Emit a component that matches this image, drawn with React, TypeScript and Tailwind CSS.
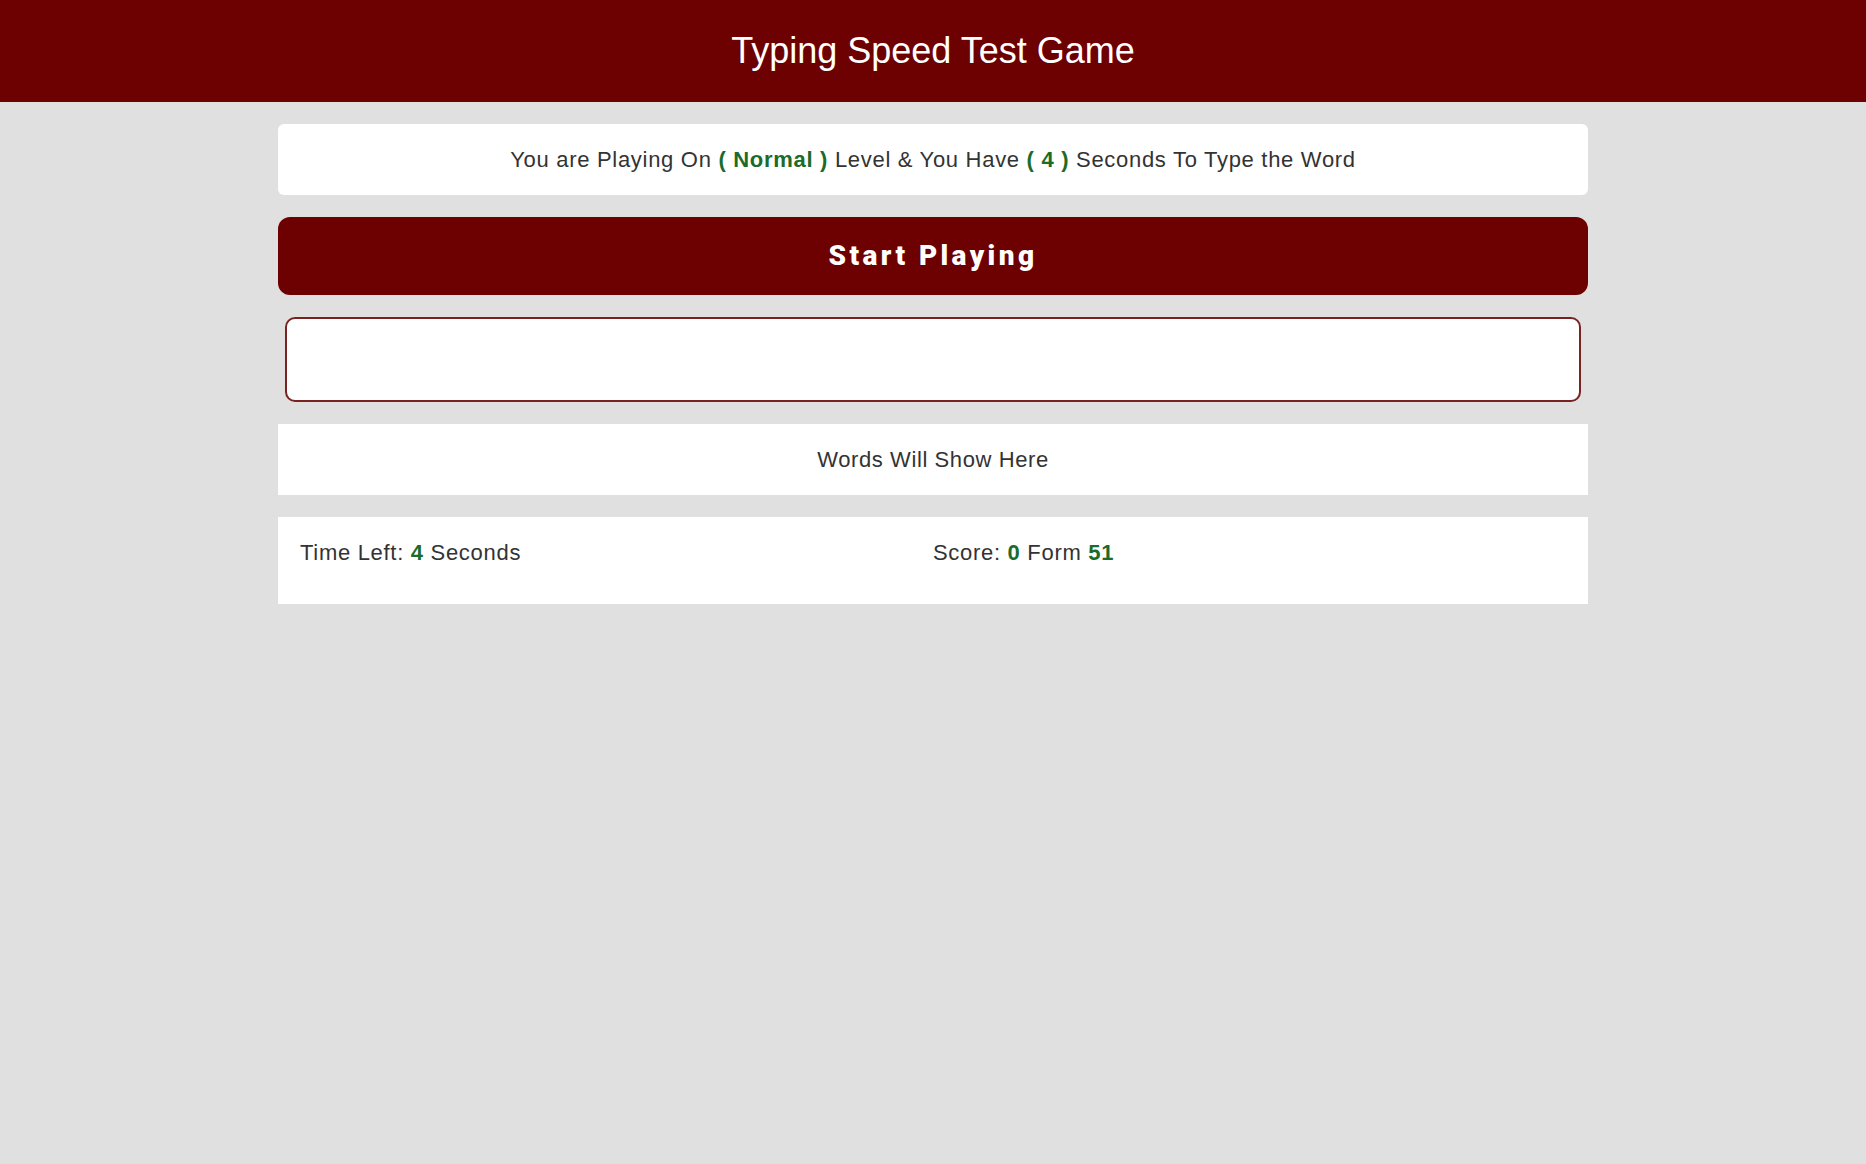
export default function App() {
  const green = "text-[#1b6b2b] font-bold";

  return (
    <div className="min-h-screen bg-[#e0e0e0] text-[#333] font-['Liberation_Sans',Arial,sans-serif]">
      <header className="h-[102px] bg-[#6d0000] flex items-center justify-center">
        <h1 className="text-[36px] text-white">Typing Speed Test Game</h1>
      </header>

      <main className="w-[1310px] mx-auto pt-[22px] flex flex-col gap-[22px]">
        <div className="h-[71px] bg-white rounded-md flex items-center justify-center text-[22px] tracking-[0.7px]">
          <span>
            You are Playing On <span className={green}>( Normal )</span> Level &amp; You Have{" "}
            <span className={green}>( 4 )</span> Seconds To Type the Word
          </span>
        </div>

        <button className="h-[78px] bg-[#6d0000] rounded-xl text-white text-[28px] font-black tracking-[3.4px] font-['Roboto',sans-serif]">
          Start Playing
        </button>

        <input
          type="text"
          className="mx-[7px] h-[85px] bg-white border-2 border-[#7a2222] rounded-[10px] outline-none px-4 text-[22px]"
        />

        <div className="h-[71px] bg-white flex items-center justify-center text-[22px] tracking-[0.6px]">
          Words Will Show Here
        </div>

        <div className="h-[87px] bg-white flex px-[22px] pt-[19px] text-[22px] tracking-[0.7px]">
          <div className="w-1/2">
            Time Left: <span className={green}>4</span> Seconds
          </div>
          <div className="w-1/2">
            Score: <span className={green}>0</span> Form <span className={green}>51</span>
          </div>
        </div>
      </main>
    </div>
  );
}
